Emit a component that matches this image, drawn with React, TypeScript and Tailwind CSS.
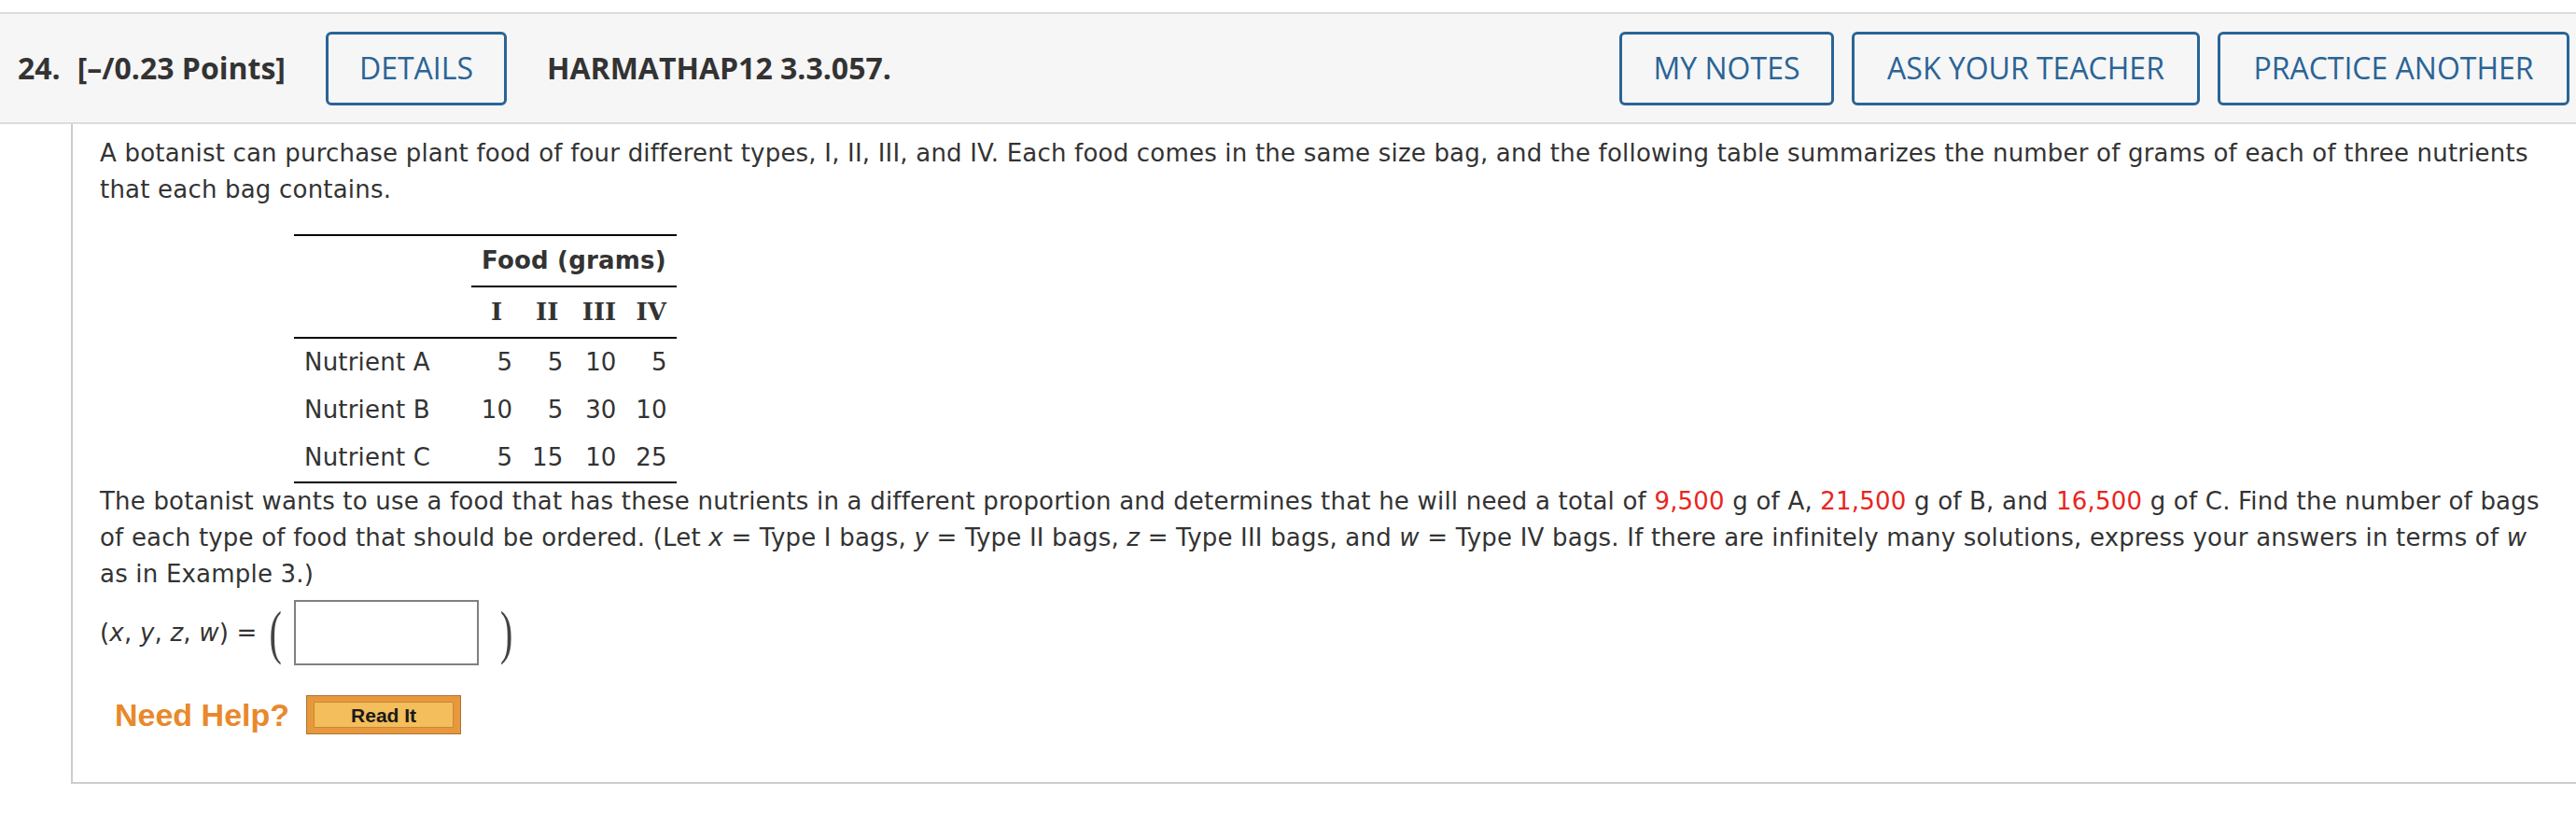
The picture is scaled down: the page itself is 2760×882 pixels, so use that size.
import type { ReactNode } from 'react';

const foods = ['I', 'II', 'III', 'IV'];

const nutrients = [
  { name: 'Nutrient A', values: [5, 5, 10, 5] },
  { name: 'Nutrient B', values: [10, 5, 30, 10] },
  { name: 'Nutrient C', values: [5, 15, 10, 25] },
];

function HeaderButton({ children, className }: { children: ReactNode; className: string }) {
  return (
    <button
      className={`flex h-[79px] items-center justify-center rounded-[6px] border-[3px] border-[#2a6496] bg-[#f6f6f6] text-[32px] leading-none text-[#2a6496] ${className}`}
    >
      {children}
    </button>
  );
}

export default function App() {
  return (
    <div className="min-h-screen bg-white pt-[13px] text-[#333]">
      {/* question header */}
      <div className="flex h-[120px] items-center border-y-2 border-[#dddddd] bg-[#f6f6f6] pl-[19px] pr-[7px] font-['Open_Sans',sans-serif]">
        <span className="text-[32px] font-bold leading-none">24.</span>
        <span className="ml-[18px] text-[32px] font-bold leading-none">[–/0.23 Points]</span>
        <HeaderButton className="ml-[43px] w-[194px]">DETAILS</HeaderButton>
        <span className="ml-[43px] text-[32px] font-bold leading-none">HARMATHAP12 3.3.057.</span>
        <div className="ml-auto flex gap-[19px]">
          <HeaderButton className="w-[230px]">MY NOTES</HeaderButton>
          <HeaderButton className="w-[373px]">ASK YOUR TEACHER</HeaderButton>
          <HeaderButton className="w-[377px]">PRACTICE ANOTHER</HeaderButton>
        </div>
      </div>

      {/* question body */}
      <div className="ml-[76px] border-b-2 border-l-2 border-[#cccccc] pb-[51px] pl-[29px] pr-[28px] pt-[12px] font-['DejaVu_Sans',Verdana,sans-serif] text-[26px] leading-[39px] tracking-[0.2px]">
        <p>
          A botanist can purchase plant food of four different types, I, II, III, and IV. Each food comes in the same
          size bag, and the following table summarizes the number of grams of each of three nutrients that each bag
          contains.
        </p>

        <table className="ml-[208px] mt-[28px] border-collapse border-y-2 border-black">
          <thead>
            <tr>
              <th className="w-[190px]" />
              <th colSpan={4} className="border-b-2 border-black px-[11px] py-[7px] text-center font-bold">
                Food (grams)
              </th>
            </tr>
            <tr className="border-b-2 border-black">
              <th />
              {foods.map((f) => (
                <th
                  key={f}
                  className="px-[10px] py-[7px] text-center font-['DejaVu_Serif',serif] text-[26px] font-bold tracking-normal"
                >
                  {f}
                </th>
              ))}
            </tr>
          </thead>
          <tbody>
            {nutrients.map((row) => (
              <tr key={row.name}>
                <td className="px-[11px] py-[6px] text-left">{row.name}</td>
                {row.values.map((v, i) => (
                  <td key={i} className="px-[10px] py-[6px] text-right">
                    {v}
                  </td>
                ))}
              </tr>
            ))}
          </tbody>
        </table>

        <p>
          The botanist wants to use a food that has these nutrients in a different proportion and determines that he
          will need a total of <span className="text-[#e8261e]">9,500</span> g of A,{' '}
          <span className="text-[#e8261e]">21,500</span> g of B, and <span className="text-[#e8261e]">16,500</span> g
          of C. Find the number of bags of each type of food that should be ordered. (Let <i>x</i> = Type I bags,{' '}
          <i>y</i> = Type II bags, <i>z</i> = Type III bags, and <i>w</i> = Type IV bags. If there are infinitely many
          solutions, express your answers in terms of <i>w</i> as in Example 3.)
        </p>

        {/* answer */}
        <div className="mt-[8px] flex items-center">
          <span>
            (<i>x</i>, <i>y</i>, <i>z</i>, <i>w</i>) =
          </span>
          <span className="ml-[13px] inline-block scale-y-[1.6] font-['Liberation_Serif',serif] text-[40px] leading-none text-[#444]">
            (
          </span>
          <div className="ml-[13px] h-[70px] w-[198px] border-2 border-[#808080] bg-white" />
          <span className="ml-[23px] inline-block scale-y-[1.6] font-['Liberation_Serif',serif] text-[40px] leading-none text-[#444]">
            )
          </span>
        </div>

        {/* help */}
        <div className="ml-[16px] mt-[32px] flex items-center">
          <span className="font-['Liberation_Sans',Arial,sans-serif] text-[34px] font-bold leading-none tracking-normal text-[#e8892c]">
            Need Help?
          </span>
          <button className="ml-[18px] flex h-[42px] w-[166px] border border-[#a8743a] bg-[#e8983c] px-[7px] py-[6px]">
            <span className="flex h-full w-full items-center justify-center border border-[#c98a35] bg-[#f3be5b] font-['Liberation_Sans',Arial,sans-serif] text-[21px] font-bold leading-none tracking-normal text-[#1a1a1a]">
              Read It
            </span>
          </button>
        </div>
      </div>
    </div>
  );
}
